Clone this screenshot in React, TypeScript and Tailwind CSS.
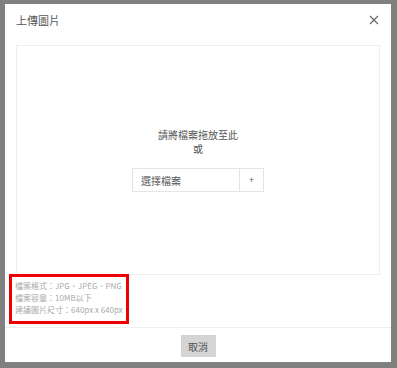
import React from 'react';

const App: React.FC = () => {
  return (
    <div
      className="w-[397px] h-[368px] bg-[#808080] pt-[4px] pl-[5px] overflow-hidden"
      style={{ fontFamily: '"Noto Sans CJK TC", "Noto Sans", sans-serif' }}
    >
      <div className="w-[386px] h-[358px] bg-white flex flex-col">
        <div className="flex items-center justify-between h-[30px] pt-[2px] pl-[11px] pr-[12px]">
          <span className="text-[11px] text-[#555]">上傳圖片</span>
          <svg width="10" height="10" viewBox="0 0 10 10" className="text-[#666]">
            <path d="M1 1L9 9M9 1L1 9" stroke="currentColor" strokeWidth="1.2" />
          </svg>
        </div>
        <div className="px-[11px] pt-[11px]">
          <div className="h-[230px] border border-[#eee] flex flex-col items-center justify-center">
            <p className="text-[10px] text-[#555] leading-[14px]">請將檔案拖放至此</p>
            <p className="text-[10px] text-[#555] leading-[14px]">或</p>
            <div className="flex mt-[12px] h-[24px] w-[132px] border border-[#e5e5e5]">
              <div className="flex-1 flex items-center pl-[8px] text-[10px] text-[#555]">選擇檔案</div>
              <div className="w-[24px] border-l border-[#e5e5e5] flex items-center justify-center text-[9px] text-[#666]">+</div>
            </div>
          </div>
        </div>
        <div className="flex">
          <div className="ml-[4px] mt-[-1px] border-[3px] border-[#e00] px-[3px] pt-[3px] pb-[5px] flex flex-col text-[8px] leading-[12px] text-[#aaa]">
            <span>檔案格式：JPG、JPEG、PNG</span>
            <span>檔案容量：10MB以下</span>
            <span>建議圖片尺寸：640px x 640px</span>
          </div>
        </div>
        <div className="mt-[3px] border-t border-[#eee] flex justify-center pt-[7px]">
          <div className="w-[35px] h-[22px] bg-[#d4d4d4] flex items-center justify-center text-[10px] text-[#555]">取消</div>
        </div>
      </div>
    </div>
  );
};

export default App;
